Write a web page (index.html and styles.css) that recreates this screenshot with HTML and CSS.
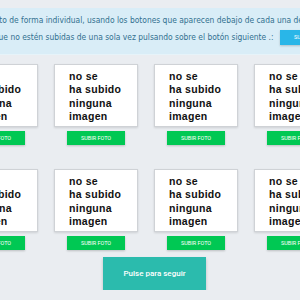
FILE: index.html
```html
<!DOCTYPE html>
<html lang="es">
<head>
  <meta charset="UTF-8" />
  <title>Subir fotos</title>
  <meta name="viewport" content="width=device-width, initial-scale=1.0">
  <link rel="stylesheet" href="styles.css">
</head>
<body>
  <div class="aviso">
    Puede subir cada foto de forma individual, usando los botones que aparecen debajo de cada una de ellas,<br>
    o subir todas las fotos que no estén subidas de una sola vez pulsando sobre el botón siguiente .:
    <a class="btn-todas" href="#">Subir todas</a>
  </div>

  <div class="fotos">
    <div class="foto">
      <div class="marco">no se<br>ha subido<br>ninguna<br>imagen</div>
      <a class="btn-subir" href="#">Subir foto</a>
    </div>
    <div class="foto">
      <div class="marco">no se<br>ha subido<br>ninguna<br>imagen</div>
      <a class="btn-subir" href="#">Subir foto</a>
    </div>
    <div class="foto">
      <div class="marco">no se<br>ha subido<br>ninguna<br>imagen</div>
      <a class="btn-subir" href="#">Subir foto</a>
    </div>
    <div class="foto">
      <div class="marco">no se<br>ha subido<br>ninguna<br>imagen</div>
      <a class="btn-subir" href="#">Subir foto</a>
    </div>
    <div class="foto">
      <div class="marco">no se<br>ha subido<br>ninguna<br>imagen</div>
      <a class="btn-subir" href="#">Subir foto</a>
    </div>
    <div class="foto">
      <div class="marco">no se<br>ha subido<br>ninguna<br>imagen</div>
      <a class="btn-subir" href="#">Subir foto</a>
    </div>
    <div class="foto">
      <div class="marco">no se<br>ha subido<br>ninguna<br>imagen</div>
      <a class="btn-subir" href="#">Subir foto</a>
    </div>
    <div class="foto">
      <div class="marco">no se<br>ha subido<br>ninguna<br>imagen</div>
      <a class="btn-subir" href="#">Subir foto</a>
    </div>
  </div>

  <a class="btn-seguir" href="#">Pulse para seguir</a>
</body>
</html>
```

FILE: styles.css
```css
body {
  margin: 0;
  background: #eaedf1;
  overflow: hidden;
  font-family: 'Liberation Sans', Arial, sans-serif;
}
a {
  text-decoration: none;
}
.aviso {
  margin: 8px -100px 0 -150px;
  padding: 4px 0 8px;
  background: #d9edf7;
  border-bottom: 1px solid #e6f3f9;
  color: #31708f;
  font-family: 'DejaVu Sans Condensed', 'DejaVu Sans', sans-serif;
  font-size: 8.4px;
  line-height: 17px;
  text-align: center;
  white-space: nowrap;
}
.btn-todas {
  display: inline-block;
  vertical-align: middle;
  margin-left: 4px;
  padding: 0 14px;
  height: 15px;
  line-height: 15px;
  background: #29b6e8;
  color: #fff;
  font-family: Roboto, sans-serif;
  font-size: 5.5px;
  text-transform: uppercase;
  box-shadow: 0 1px 2px rgba(0,0,0,.2);
}
.fotos {
  display: grid;
  grid-template-columns: repeat(4, 100px);
  row-gap: 24px;
  margin: 9px 0 0 -54px;
}
.foto {
  display: flex;
  flex-direction: column;
  align-items: center;
}
.marco {
  width: 84px;
  height: 63px;
  box-sizing: border-box;
  padding: 5px 0 0 14px;
  background: #fff;
  border: 1px solid #cfd2d6;
  box-shadow: 0 1px 2px rgba(0,0,0,.12);
  color: #111;
  font-size: 10.5px;
  font-weight: bold;
  line-height: 13.3px;
  letter-spacing: .3px;
}
.btn-subir {
  margin-top: 4px;
  width: 58px;
  height: 14px;
  line-height: 14px;
  background: #00c853;
  color: #fff;
  font-family: Roboto, sans-serif;
  font-size: 5.5px;
  text-align: center;
  text-transform: uppercase;
  box-shadow: 0 1px 2px rgba(0,0,0,.2);
}
.btn-seguir {
  display: block;
  width: 103px;
  height: 33px;
  margin: 7px 0 0 103px;
  background: #2bbbad;
  color: #fff;
  font-family: Roboto, sans-serif;
  font-size: 8px;
  font-weight: 500;
  line-height: 33px;
  text-align: center;
  box-shadow: 0 2px 3px rgba(0,0,0,.2);
}
```
